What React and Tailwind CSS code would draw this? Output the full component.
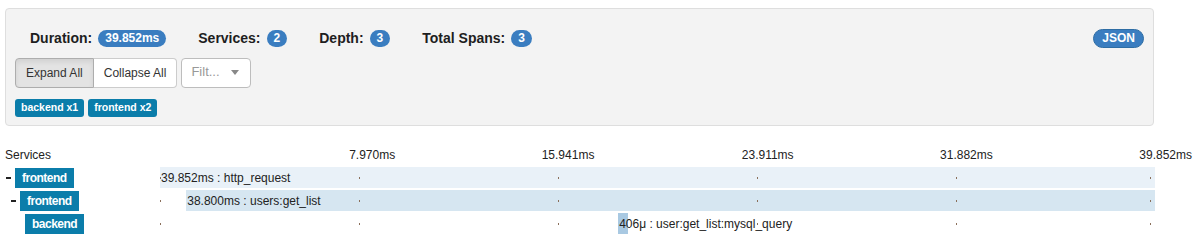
import React from 'react';

const ticks = ['7.970ms', '15.941ms', '23.911ms', '31.882ms', '39.852ms'];
const TRACK = 995;
const TOTAL = 39.852;

const spans = [
  { id: 1, depth: 0, service: 'frontend', collapsible: true, start: 0, dur: 39.852, label: '39.852ms : http_request', bar: 'bg-[#e9f1f8]' },
  { id: 2, depth: 1, service: 'frontend', collapsible: true, start: 1.052, dur: 38.8, label: '38.800ms : users:get_list', bar: 'bg-[#d6e6f1]' },
  { id: 3, depth: 2, service: 'backend', collapsible: false, start: 18.35, dur: 0.406, label: '406μ : user:get_list:mysql_query', bar: 'bg-[#a9c9e2]' },
];

const dotX = [0, 199, 398, 597, 796, 990];

function Stat({ label, value }) {
  return (
    <div className="flex items-center gap-[6px]">
      <span className="text-[14px] font-bold text-[#1e1e1e]">{label}</span>
      <span className="h-[17px] min-w-[20px] px-[7px] rounded-full bg-[#3a7dc0] text-white text-[12px] font-bold flex items-center justify-center leading-none">
        {value}
      </span>
    </div>
  );
}

function SpanRow({ span }) {
  const left = (span.start / TOTAL) * TRACK;
  const width = Math.max((span.dur / TOTAL) * TRACK, 1);
  return (
    <div className="flex h-[21px] mb-[2px]">
      <div className="w-[160px] flex items-center" style={{ paddingLeft: 6 + span.depth * 5 }}>
        <div className="w-[9px] flex items-center">
          {span.collapsible && <div className="w-[5px] h-[2px] bg-[#222]" />}
        </div>
        <div className="h-[20px] px-[7px] bg-[#0b7daa] text-white text-[12px] font-bold tracking-[-0.5px] flex items-center">
          {span.service}
        </div>
      </div>
      <div className="relative w-[995px] flex items-stretch">
        <div className={`${span.bar} h-full flex items-center`} style={{ marginLeft: left, width }}>
          <span className="whitespace-nowrap text-[12px] text-[#222] pl-px relative z-10">{span.label}</span>
        </div>
        {dotX.map((x, i) => (
          <span key={i} className="absolute top-[10px] w-px h-[2px] bg-[#8a6f5a]" style={{ left: x }} />
        ))}
      </div>
    </div>
  );
}

export default function App() {
  return (
    <div className="w-[1199px] h-[242px] bg-white overflow-hidden font-['Liberation_Sans',Arial,sans-serif]">
      <div className="ml-[5px] mt-[8px] w-[1149px] h-[118px] bg-[#f3f3f3] border border-[#dedede] rounded-[4px] px-[9px] pt-[19px]">
        <div className="flex items-center justify-between h-[20px]">
          <div className="flex items-center gap-[32px] pl-[15px]">
            <Stat label="Duration:" value="39.852ms" />
            <Stat label="Services:" value="2" />
            <Stat label="Depth:" value="3" />
            <Stat label="Total Spans:" value="3" />
          </div>
          <button className="h-[19px] px-[8px] rounded-full bg-[#3a7dc0] border border-[#2e6da4] text-white text-[12px] font-bold leading-none">
            JSON
          </button>
        </div>
        <div className="flex items-center gap-[4px] mt-[10px]">
          <div className="flex">
            <button className="h-[30px] px-[10px] text-[12px] text-[#333] bg-[#e3e3e3] border border-[#adadad] rounded-l-[4px] shadow-[inset_0_3px_5px_rgba(0,0,0,0.08)]">
              Expand All
            </button>
            <button className="h-[30px] px-[10px] text-[12px] text-[#333] bg-white border border-l-0 border-[#ccc] rounded-r-[4px]">
              Collapse All
            </button>
          </div>
          <div className="h-[30px] w-[70px] bg-white border border-[#bdbdbd] rounded-[4px] flex items-center justify-between pl-[9px] pr-[11px]">
            <span className="text-[13px] text-[#999] -mt-[3px]">Filt...</span>
            <span className="w-0 h-0 border-l-[4px] border-r-[4px] border-t-[5px] border-l-transparent border-r-transparent border-t-[#888] -mt-[2px]" />
          </div>
        </div>
        <div className="flex gap-[4px] mt-[11px]">
          <span className="h-[18px] px-[6px] rounded-[3px] bg-[#0b7daa] text-white text-[10.5px] font-bold flex items-center">backend x1</span>
          <span className="h-[18px] px-[6px] rounded-[3px] bg-[#0b7daa] text-white text-[10.5px] font-bold flex items-center">frontend x2</span>
        </div>
      </div>

      <div className="mt-[19px]">
        <div className="ml-[5px] w-[1187px] h-[20px] grid grid-cols-[191px_repeat(5,minmax(0,1fr))] items-center text-[12px] text-[#222]">
          <span>Services</span>
          {ticks.map((t) => (
            <span key={t} className="text-right">{t}</span>
          ))}
        </div>
        <div className="mt-[2px]">
          {spans.map((s) => (
            <SpanRow key={s.id} span={s} />
          ))}
        </div>
      </div>
    </div>
  );
}
